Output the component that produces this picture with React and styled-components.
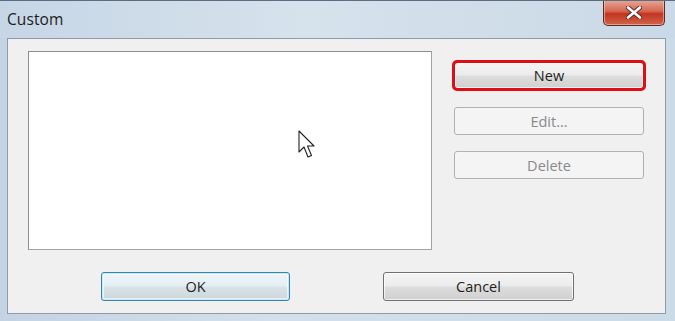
import React from 'react';
import styled, { createGlobalStyle, css } from 'styled-components';

const Global = createGlobalStyle`
  html, body { margin: 0; padding: 0; background: #dbe5ee; }
  body { font-family: "Open Sans", "Noto Sans", "DejaVu Sans", sans-serif; }
`;

const Window = styled.div`
  width: 675px;
  height: 321px;
  display: flex;
  flex-direction: column;
  background: linear-gradient(90deg, #c3d3e3 0%, #d3e0eb 40%, #cbdbe8 100%);
  border-top: 1px solid #5b6d80;
  box-sizing: border-box;
  overflow: hidden;
`;

const TitleBar = styled.div`
  height: 37px;
  display: flex;
  align-items: flex-start;
  justify-content: space-between;
  padding-left: 7px;
  padding-right: 8px;
  background: linear-gradient(90deg, #c6d6e6 0%, #d6e2ec 45%, #cad9e7 100%);
`;

const Title = styled.span`
  font-family: "Open Sans", "Noto Sans", sans-serif;
  font-size: 15.5px;
  color: #1b1b1b;
  margin-top: 7px;
  letter-spacing: 0.1px;
`;

const CloseButton = styled.div`
  width: 60px;
  height: 25px;
  margin-top: -1px;
  margin-right: 2px;
  display: flex;
  align-items: center;
  justify-content: center;
  border: 1px solid #5a2a28;
  border-top: none;
  border-radius: 0 0 5px 5px;
  background: linear-gradient(180deg, #e8a898 0%, #d56650 45%, #c23520 55%, #d0654a 100%);
  box-shadow: inset 0 0 0 1px rgba(255, 220, 210, 0.5);
`;

const Frame = styled.div`
  flex: 1;
  display: flex;
  padding: 0 9px 7px 7px;
`;

const Client = styled.div`
  flex: 1;
  display: flex;
  flex-direction: column;
  background: #f0f0f0;
  border: 1px solid #8e9caa;
`;

const TopRow = styled.div`
  display: flex;
  padding: 12px 0 0 20px;
  gap: 22px;
`;

const ListBox = styled.div`
  position: relative;
  width: 402px;
  height: 197px;
  background: #fff;
  border: 1px solid #8d8d8d;
  border-right-color: #a3a3a3;
  border-bottom-color: #a3a3a3;
`;

const Cursor = styled.svg`
  position: absolute;
  left: 269px;
  top: 78px;
`;

const SideButtons = styled.div`
  display: flex;
  flex-direction: column;
  padding-top: 11px;
`;

const BottomRow = styled.div`
  display: flex;
  padding: 22px 0 0 93px;
  gap: 93px;
`;

const Button = styled.div`
  box-sizing: border-box;
  width: ${p => p.$w || 190}px;
  height: ${p => p.$h || 28}px;
  margin-bottom: ${p => p.$mb || 0}px;
  display: flex;
  align-items: center;
  justify-content: center;
  font-family: "Open Sans", "Noto Sans", sans-serif;
  font-size: 14.5px;
  color: #1e1e1e;
  border: 1px solid #707070;
  border-radius: 3px;
  background: linear-gradient(180deg, #f4f4f4 0%, #ececec 48%, #dddddd 52%, #d0d0d0 100%);
  box-shadow: inset 0 0 0 1px rgba(255, 255, 255, 0.7);

  ${p => p.$disabled && css`
    color: #8a8a8a;
    border-color: #adb2b5;
    background: #f4f4f4;
    box-shadow: none;
  `}

  ${p => p.$default && css`
    border-color: #3c7fb1;
    box-shadow: inset 0 0 0 1px #bfeefa, inset 0 0 0 2px rgba(255, 255, 255, 0.6);
    background: linear-gradient(180deg, #eef6fa 0%, #e4eef3 48%, #d8e2e7 52%, #cdd7dc 100%);
  `}

  ${p => p.$marked && css`
    outline: 3px solid #e00d16;
    outline-offset: -1px;
  `}
`;

export default function App() {
  return (
    <>
      <Global />
      <Window>
        <TitleBar>
          <Title>Custom</Title>
          <CloseButton>
            <svg width="16" height="13" viewBox="0 0 16 13">
              <path d="M2 1.5 L14 11.5 M14 1.5 L2 11.5" stroke="#5a2a28" strokeWidth="4.5" strokeLinecap="round" />
              <path d="M2 1.5 L14 11.5 M14 1.5 L2 11.5" stroke="#ffffff" strokeWidth="2.6" strokeLinecap="round" />
            </svg>
          </CloseButton>
        </TitleBar>
        <Frame>
          <Client>
            <TopRow>
              <ListBox>
                <Cursor width="20" height="32" viewBox="0 0 20 32">
                  <path d="M1 1 L1 22 L6 17 L10 27 L13.5 25.5 L9.5 16 L16 16 Z" fill="#fff" stroke="#222" strokeWidth="1.1" strokeLinejoin="round" />
                </Cursor>
              </ListBox>
              <SideButtons>
                <Button $marked $h={27} $w={190} $mb={18}>New</Button>
                <Button $disabled $w={190} $mb={16}>Edit...</Button>
                <Button $disabled $w={190}>Delete</Button>
              </SideButtons>
            </TopRow>
            <BottomRow>
              <Button $default $w={189} $h={29}>OK</Button>
              <Button $w={191} $h={29}>Cancel</Button>
            </BottomRow>
          </Client>
        </Frame>
      </Window>
    </>
  );
}
